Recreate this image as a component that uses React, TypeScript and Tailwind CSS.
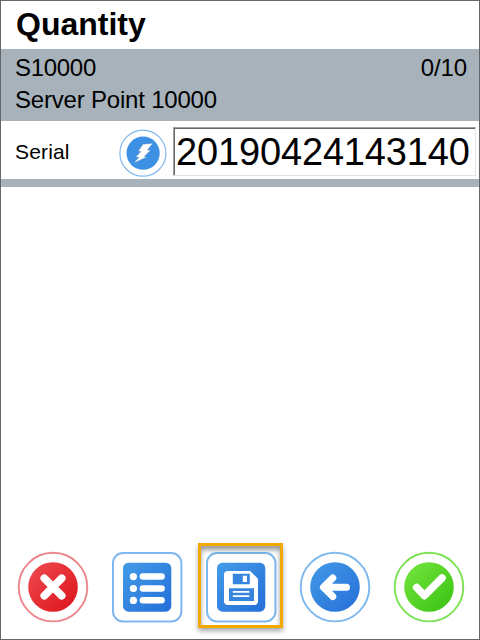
import type { ReactNode } from 'react';

type Tone = 'red' | 'blue' | 'green';

const ring: Record<Tone, string> = { red: '#ec868c', blue: '#7fb8ef', green: '#7de154' };

function Button({ label, tone, square, children }: { label: string; tone: Tone; square?: boolean; children: ReactNode }) {
  return (
    <button aria-label={label} className="block size-[70px] shrink-0">
      <svg viewBox="0 0 70 70" className="block size-[70px] overflow-visible">
        {square ? (
          <>
            <rect x="1" y="1" width="68.4" height="68.4" rx="10" fill="#fff" stroke={ring[tone]} strokeWidth="2" />
            <rect x="11" y="10.7" width="48.3" height="49" rx="5.5" fill={`url(#${tone})`} />
          </>
        ) : (
          <>
            <circle cx="35" cy="35.1" r="34.3" fill="#fff" stroke={ring[tone]} strokeWidth="1.9" />
            <circle cx="35" cy="35" r="24.8" fill={`url(#${tone})`} />
          </>
        )}
        {children}
      </svg>
    </button>
  );
}

function Gradients() {
  return (
    <svg className="absolute size-0">
      <defs>
        <linearGradient id="red" x1="0" y1="0" x2="1" y2="1">
          <stop offset="0.1" stopColor="#ee464c" />
          <stop offset="0.9" stopColor="#dd181f" />
        </linearGradient>
        <linearGradient id="blue" x1="0" y1="0" x2="1" y2="1">
          <stop offset="0.05" stopColor="#4299e7" />
          <stop offset="0.95" stopColor="#2670d9" />
        </linearGradient>
        <linearGradient id="green" x1="0" y1="0" x2="1" y2="1">
          <stop offset="0.1" stopColor="#70e23a" />
          <stop offset="0.9" stopColor="#3ec516" />
        </linearGradient>
      </defs>
    </svg>
  );
}

export default function App() {
  return (
    <div className="flex h-[640px] w-[480px] flex-col border border-[#666] bg-white font-['Liberation_Sans',Arial,sans-serif] text-black">
      <Gradients />
      <h1 className="h-12 pl-[15px] text-[32px] leading-[46px] font-bold">Quantity</h1>
      <section className="h-[72px] bg-[#a8b2ba] pt-[3px] pr-3 pl-[14px] text-[24px] leading-8">
        <div className="flex justify-between">
          <span className="tracking-[-0.3px]">S10000</span>
          <span className="tracking-[-0.1px]">0/10</span>
        </div>
        <div className="tracking-[-0.2px]">Server Point 10000</div>
      </section>
      <div className="flex h-[58px] pl-[14px]">
        <label htmlFor="serial" className="w-[103px] pt-[18px] text-[21px] leading-[26px] tracking-[0.15px]">Serial</label>
        <button aria-label="Generate serial" className="mt-[8px] size-12 shrink-0">
          <svg viewBox="0 0 48 48" className="block size-12 overflow-visible">
            <circle cx="24.9" cy="24.2" r="23" fill="#fff" stroke="#7fb8ef" strokeWidth="1.2" />
            <circle cx="25.1" cy="24.2" r="16.6" fill="#3d91e4" />
            <path d="M25.1 15.3 34.6 14.4 29.3 21.1 32.3 21.4 26.1 27.4 28.5 27.9 16.3 33.7 20.9 28.3 17.9 27.8 23.1 22.5 20.4 22Z" fill="#fff" stroke="#8295a8" strokeWidth="0.3" />
          </svg>
        </button>
        <div className="mt-[6px] ml-[7px] h-[49px] w-[303px] border border-t-[#a0a0a0] border-r-[#e3e3e3] border-b-[#e3e3e3] border-l-[#a0a0a0]">
          <input
            id="serial"
            readOnly
            value="20190424143140"
            className="block h-[47px] w-[301px] border-t border-l border-[#696969] bg-white pt-px pl-px text-[38px] tracking-[-0.15px] outline-none"
          />
        </div>
      </div>
      <div className="h-2 bg-[#a8b2ba]" />
      <main className="flex-1" />
      <nav className="relative flex h-[87px] gap-6 pl-[17px]">
        <Button label="Cancel" tone="red">
          <path d="M26.3 26.3 43.7 43.7M43.7 26.3 26.3 43.7" stroke="#fff" strokeWidth="7.7" strokeLinecap="round" />
        </Button>
        <Button label="List" tone="blue" square>
          <g fill="#fff">
            <circle cx="21.4" cy="24.6" r="3.6" />
            <circle cx="21.4" cy="36.5" r="3.6" />
            <circle cx="21.4" cy="48.4" r="3.6" />
            <rect x="27.6" y="21.3" width="25.2" height="6.5" rx="3.25" />
            <rect x="27.6" y="33.2" width="25.2" height="6.5" rx="3.25" />
            <rect x="27.6" y="45.1" width="25.2" height="6.5" rx="3.25" />
          </g>
        </Button>
        <Button label="Save" tone="blue" square>
          <path d="M22.5 18.9H44.2L52 26.7V49Q52 53 48 53H22Q18 53 18 49V22.9Q18 18.9 22 18.9Z" fill="#fff" />
          <path d="M26.8 21.7H43.8V32.2H26.8Z M23 36.2H48V49H23Z" fill="#3785df" />
          <path d="M36.8 23.8H41V30H36.8Z M26.8 39.1H43.3V40.7H26.8Z M26.8 43.3H43.3V44.9H26.8Z" fill="#fff" />
        </Button>
        <Button label="Back" tone="blue">
          <path d="M46.5 35.3H25M32.8 26 23.4 35.3 32.8 44.6" fill="none" stroke="#fff" strokeWidth="7" strokeLinecap="round" strokeLinejoin="round" />
        </Button>
        <Button label="Confirm" tone="green">
          <path d="M22.7 35.5 30.4 43.6 48 26" fill="none" stroke="#fff" strokeWidth="7.6" strokeLinecap="round" strokeLinejoin="round" />
        </Button>
        <div className="pointer-events-none absolute top-[-9px] left-[197px] h-[85px] w-[85px] border-[3px] border-[#f2a900] shadow-[0_3px_5px_rgba(0,0,0,0.35),inset_0_4px_5px_rgba(0,0,0,0.4)]" />
      </nav>
    </div>
  );
}
